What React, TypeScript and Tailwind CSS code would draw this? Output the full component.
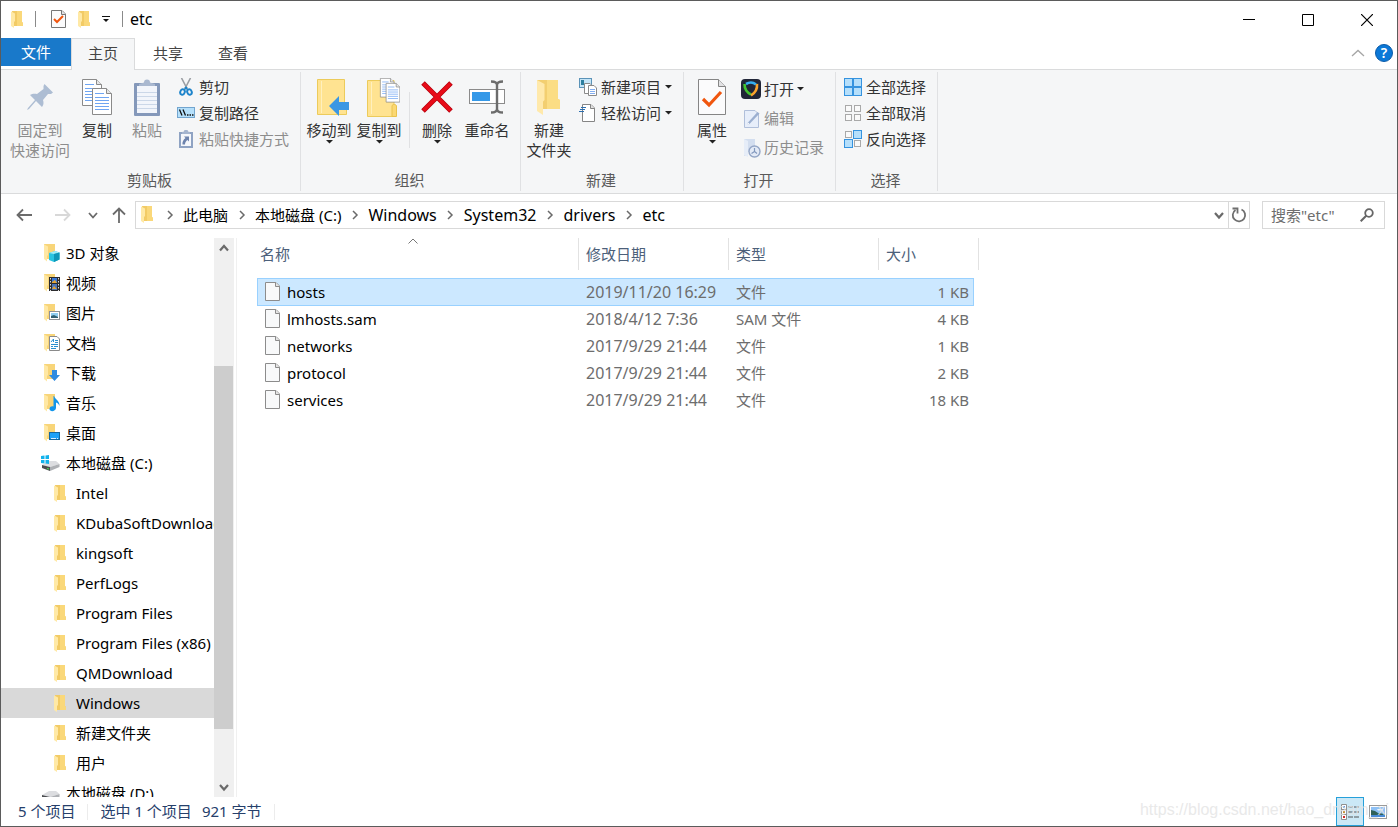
import { type ReactNode } from "react";

// ---------- Icons ----------

function FolderIcon({ className = "h-[17px] w-3" }: { className?: string }) {
  return (
    <svg viewBox="0 0 12 17" className={`shrink-0 ${className}`} aria-hidden="true">
      <path d="M1 0H11V11L12 12V15H3Z" fill="#f2cb66" />
      <path d="M6 0H11V11L12 12V15H6Z" fill="#fad87a" />
      <path d="M0 0.500L4 2.500V10L3 11V17L0 15Z" fill="#ffe9a6" />
    </svg>
  );
}

function BigFolderIcon() {
  return (
    <svg viewBox="0 0 26 36" className="h-9 w-[26px]" aria-hidden="true">
      <path d="M1 1H22V20L24 21V30H7Z" fill="#f3cf70" />
      <path d="M11 1H22V20L24 21V30H11Z" fill="#fbdd84" />
      <path d="M1 1L8.500 5V21L7 22.500V36L1 32Z" fill="#ffe9ab" />
    </svg>
  );
}

function PageIcon() {
  return (
    <svg viewBox="0 0 15 19" className="mb-0.5 h-[19px] w-[15px] shrink-0" aria-hidden="true">
      <path d="M.5.5H11L14.500 4V18.500H.5Z" fill="#f8f9fa" stroke="#8c8c8c" />
      <path d="M10.500.5V4.500H14.500" fill="#e4e4e4" stroke="#8c8c8c" />
    </svg>
  );
}

function CheckPageIcon({ className }: { className: string }) {
  return (
    <svg viewBox="0 0 28 36" className={`shrink-0 ${className}`} aria-hidden="true">
      <path d="M.5.5H20.500L27.500 7.500V35.500H.5Z" fill="#fbfbfc" stroke="#858585" />
      <path d="M20.500.5V7.500H27.500" fill="#e2e2e4" stroke="#858585" />
      <path d="M5 20L11 26L23 13" fill="none" stroke="#f0560f" strokeWidth="3.200" />
    </svg>
  );
}

function SmallCheckPageIcon() {
  return (
    <svg viewBox="0 0 15 18" className="h-[18px] w-[15px]" aria-hidden="true">
      <path d="M.5.5H11L14.500 4V17.500H.5Z" fill="#fbfbfc" stroke="#777" />
      <path d="M10.500.5V4.500H14.500" fill="#e2e2e4" stroke="#777" />
      <path d="M3 9L6 12L12 6" fill="none" stroke="#f0560f" strokeWidth="2" />
    </svg>
  );
}

function PinIcon() {
  return (
    <svg viewBox="0 0 28 28" className="h-7 w-7" aria-hidden="true">
      <path d="M18.500 1L27 9.500L25 11H22L17 17C18 20 17.500 22 16 24L10 18L3 26L1 27L2 25L9 17L4 12C6 10.500 9 10.500 11 11L17.500 6V3Z" fill="#adbdd3" />
    </svg>
  );
}

function TextPage({ x, y }: { x: number; y: number }) {
  return (
    <g transform={`translate(${x} ${y})`}>
      <path d="M.5.5H14.500L19.500 5.500V26.500H.5Z" fill="#fff" stroke="#8a8a8a" />
      <path d="M14.500.5V5.500H19.500" fill="#e6e6e6" stroke="#8a8a8a" />
      <path d="M3 5.500H12M3 9.500H17M3 12.500H17M3 15.500H17M3 18.500H17M3 21.500H17" stroke="#6fa5f2" />
    </g>
  );
}

function CopyIcon() {
  return (
    <svg viewBox="0 0 30 36" className="h-9 w-[30px]" aria-hidden="true">
      <TextPage x={0} y={0} />
      <TextPage x={10} y={9} />
    </svg>
  );
}

function PasteIcon() {
  return (
    <svg viewBox="0 0 26 37" className="h-[37px] w-[26px]" aria-hidden="true">
      <rect y="4" width="26" height="33" rx="1" fill="#8498ba" />
      <rect x="3" y="7" width="20" height="27" fill="#f2f5fb" />
      <path d="M3 13.500H23M3 17.500H23M3 21.500H23M3 25.500H23M3 29.500H23" stroke="#cbd7e8" />
      <path d="M5 7V5L10 3.500A3 3 0 0 1 16 3.500L21 5V7Z" fill="#a9b8d0" />
    </svg>
  );
}

function ScissorsIcon() {
  return (
    <svg viewBox="0 0 14 18" className="h-[18px] w-[18px]" aria-hidden="true">
      <path d="M2.500 0L8.500 11.500M11.500 0L5.500 11.500" stroke="#9a9ea3" strokeWidth="1.600" />
      <ellipse cx="3.500" cy="14" rx="2.200" ry="2.800" fill="none" stroke="#1d84cb" strokeWidth="2" transform="rotate(20 3.500 14)" />
      <ellipse cx="10.500" cy="14" rx="2.200" ry="2.800" fill="none" stroke="#1d84cb" strokeWidth="2" transform="rotate(-20 10.500 14)" />
      <circle cx="7" cy="10" r="1.500" fill="#1d84cb" />
    </svg>
  );
}

function CopyPathIcon() {
  return (
    <svg viewBox="0 0 18 12" className="h-3 w-[18px]" aria-hidden="true">
      <rect x=".5" y=".5" width="17" height="10" fill="#b5e0fb" stroke="#72a5cf" />
      <path d="M2.500 2.500L5 8.500M6 2.500L8.500 8.500" stroke="#111" strokeWidth="1.300" />
      <path d="M10 8H11.500M12.500 8H14M15 8H16.500" stroke="#111" strokeWidth="1.500" />
    </svg>
  );
}

function PasteShortcutIcon() {
  return (
    <svg viewBox="0 0 18 18" className="h-[18px] w-[18px]" aria-hidden="true">
      <rect x="2" y="2" width="14" height="16" fill="#8fa3c3" />
      <rect x="4" y="4" width="10" height="12" fill="#f5f7fb" />
      <path d="M5 4V2L7 1.500A1.500 1.500 0 0 1 11 1.500L13 2V4Z" fill="#a5b5cf" />
      <path d="M7 6.500H12V11.500L10.500 10C9 11 8 12.500 8 14.500H5.500C5 12 6.500 9.500 8.500 8Z" fill="#6d83ad" />
    </svg>
  );
}

function MoveToIcon() {
  return (
    <svg viewBox="-9 0 42 37" className="h-[37px] w-[42px]" aria-hidden="true">
      <path d="M.5 .5H27.500V23L29.500 25V35.500H.5Z" fill="#ffe391" stroke="#eccb5b" />
      <path d="M4.500 2V34" stroke="#fff0be" />
      <path d="M12 27L22 17V23H32V31H22V37Z" fill="#3b97e3" />
    </svg>
  );
}

function CopyToIcon() {
  return (
    <svg viewBox="-9 0 42 39" className="h-[39px] w-[42px]" aria-hidden="true">
      <path d="M.5 2.500H27V38.500H.5Z" fill="#ffe391" stroke="#eccb5b" />
      <path d="M4.500 4V36" stroke="#fff0be" />
      <path d="M25 38.500V28C25 26 29.500 26 29.500 28V38.500Z" fill="#fbd873" stroke="#e9c24d" />
      <g transform="translate(13 0) scale(.72)">
        <TextPage x={0} y={0} />
        <TextPage x={8} y={7} />
      </g>
    </svg>
  );
}

function DeleteIcon() {
  return (
    <svg viewBox="0 0 32 32" className="h-8 w-8" aria-hidden="true">
      <path d="M2 2L30 30M30 2L2 30" stroke="#b5000c" strokeWidth="5" />
      <path d="M2.500 2.500L29.500 29.500M29.500 2.500L2.500 29.500" stroke="#e80b18" strokeWidth="3.600" />
    </svg>
  );
}

function RenameIcon() {
  return (
    <svg viewBox="0 0 37 34" className="h-[34px] w-[37px]" aria-hidden="true">
      <rect x=".5" y="9.500" width="35" height="14" fill="#fff" stroke="#8b8b8b" />
      <rect x="3" y="12" width="18" height="9" fill="#3599e8" />
      <path d="M28 4V30M22 1.500C26 1.500 28 2.500 28 5C28 2.500 30 1.500 34 1.500M22 32.500C26 32.500 28 31.500 28 29C28 31.500 30 32.500 34 32.500" fill="none" stroke="#6c6c6c" strokeWidth="2.400" />
    </svg>
  );
}

function NewItemIcon() {
  return (
    <svg viewBox="0 0 18 18" className="h-[18px] w-[18px]" aria-hidden="true">
      <rect x=".5" y=".5" width="12" height="9" fill="#c5e5f7" stroke="#5b93b8" />
      <rect x="2" y="2" width="3" height="5" fill="#2e7f9f" />
      <path d="M5.500 5.500H11L13 7.500V15.500H5.500Z" fill="#fff" stroke="#8a8a8a" />
      <path d="M9.500 7.500H15L17.500 10V17.500H9.500Z" fill="#fff" stroke="#8a8a8a" />
      <path d="M11 11.500H16M11 13.500H16M11 15.500H16" stroke="#83aef0" />
    </svg>
  );
}

function EasyAccessIcon() {
  return (
    <svg viewBox="0 0 18 18" className="h-[18px] w-[18px]" aria-hidden="true">
      <path d="M3.500.5H12L15.500 4V17.500H3.500Z" fill="#fff" stroke="#858585" />
      <path d="M11.500.5V4.500H15.500" fill="#e1e1e1" stroke="#858585" />
      <path d="M2 3.500H7M1 5.500H6M0 7.500H5" stroke="#2c6fb0" strokeWidth="1.200" />
    </svg>
  );
}

function OpenAppIcon() {
  return (
    <svg viewBox="0 0 20 20" className="h-5 w-5" aria-hidden="true">
      <rect width="20" height="20" rx="4" fill="#212638" />
      <path d="M5 5C8.500 3 12 3 15 5.500" fill="none" stroke="#35aef0" strokeWidth="2.600" />
      <path d="M3.500 5C3.500 10 6 13.500 10 15.500" fill="none" stroke="#43c431" strokeWidth="2.600" />
      <path d="M16 5C16.500 10 14 14 10 16.500" fill="none" stroke="#fba42d" strokeWidth="2.600" />
    </svg>
  );
}

function EditIcon() {
  return (
    <svg viewBox="0 0 20 20" className="h-5 w-5" aria-hidden="true">
      <path d="M3.500 1.500H14L17.500 5V18.500H3.500Z" fill="#e7eefa" stroke="#b0bfda" />
      <path d="M6 16L7 13.500L16.500 3L18.500 4.500L8.500 15Z" fill="#9bafd0" />
      <path d="M7 13.500L8.500 15L6 16Z" fill="#fff" />
    </svg>
  );
}

function HistoryIcon() {
  return (
    <svg viewBox="0 0 20 20" className="h-5 w-5" aria-hidden="true">
      <path d="M3 1H14V14H7V17L3 18Z" fill="#d3deef" />
      <path d="M3 1L7 3V19L3 17Z" fill="#e6edf8" />
      <circle cx="13.500" cy="13.500" r="5.500" fill="#e3eaf6" stroke="#94a6c6" strokeWidth="1.400" />
      <path d="M13.500 10V13.500L16 15.500M13.500 13.500L10.500 15.500" fill="none" stroke="#8298bd" strokeWidth="1.200" />
    </svg>
  );
}

// One flag per tile: top left, top right, bottom left, bottom right
function TilesIcon({ filled }: { filled: boolean[] }) {
  return (
    <svg viewBox="0 0 18 18" className="h-[18px] w-[18px]" aria-hidden="true">
      {filled.map((on, i) => {
        const x = (i % 2) * 9;
        const y = Math.floor(i / 2) * 9;
        return on ? (
          <rect key={i} x={x + 0.5} y={y + 0.5} width="8" height="8" fill="#b5dffb" stroke="#3593df" />
        ) : (
          <rect key={i} x={x + 1.5} y={y + 1.5} width="6" height="6" fill="#fafafa" stroke="#a9a9a9" />
        );
      })}
    </svg>
  );
}

function Caret() {
  return (
    <svg viewBox="0 0 7 4" className="h-1 w-[7px] shrink-0" aria-hidden="true">
      <path d="M0 0H7L3.500 3.500Z" fill="#222" />
    </svg>
  );
}

type ChevronDir = "up" | "down" | "right";
const CHEVRON_PATHS: Record<ChevronDir, string> = {
  up: "M2 8.500L6 4L10 8.500",
  down: "M2 4L6 8.500L10 4",
  right: "M4 2L8 6L4 10",
};

function Chevron({ dir, className = "text-[#6a6a6a]", width = 1.5 }: { dir: ChevronDir; className?: string; width?: number }) {
  return (
    <svg viewBox="0 0 12 12" className={`h-3 w-3 shrink-0 ${className}`} aria-hidden="true">
      <path d={CHEVRON_PATHS[dir]} fill="none" stroke="currentColor" strokeWidth={width} />
    </svg>
  );
}

function Arrow({ d, className }: { d: string; className: string }) {
  return (
    <svg viewBox="0 0 16 16" className={`h-4 w-4 ${className}`} aria-hidden="true">
      <path d={d} fill="none" stroke="currentColor" strokeWidth="1.800" />
    </svg>
  );
}

type TreeIconName = "objects" | "video" | "pictures" | "docs" | "downloads" | "music" | "desktop" | "system" | "drive" | "folder";

function TreeIcon({ name }: { name: TreeIconName }) {
  if (name === "folder") return <FolderIcon />;
  if (name === "system" || name === "drive") {
    return (
      <svg viewBox="0 0 20 18" className="h-[18px] w-5 shrink-0" aria-hidden="true">
        <path d="M2 11L9 7H16L19.500 10L10 13Z" fill="#dcdde0" />
        <path d="M2 11L10 13V17L2 14Z" fill="#4b4d50" />
        <path d="M10 13L19.500 10V13L10 17Z" fill="#aeb0b4" />
        <path d="M7 14.500L9 15" stroke="#4be04b" strokeWidth="1.200" />
        {name === "system" && (
          <path d="M1 2L4.500 1.500V5H1ZM5.500 1.500L9 1V5H5.500ZM1 6H4.500V9.500L1 9ZM5.500 6H9V10L5.500 9.500Z" fill="#12b2ec" />
        )}
      </svg>
    );
  }
  return (
    <svg viewBox="0 0 20 18" className="h-[18px] w-5 shrink-0" aria-hidden="true">
      <path d="M4 0H15V15H7Z" fill="#f8d579" />
      <path d="M4 .5L8 2.500V11L7 12V17.500L4 15Z" fill="#ffe8a4" />
      {name === "objects" && (
        <>
          <path d="M9 9L15 7L19.500 8.500V15.500L14 18L9 16Z" fill="#29c4e0" />
          <path d="M9 9L15 7L19.500 8.500L14 10Z" fill="#a2ecf6" />
          <path d="M14 10L19.500 8.500V15.500L14 18Z" fill="#0e97b8" />
        </>
      )}
      {name === "video" && (
        <>
          <rect x="9" y="3" width="11" height="14" fill="#2b2b2d" />
          <rect x="12" y="4" width="5" height="5" fill="#3a78d6" />
          <rect x="12" y="10" width="5" height="6" fill="#4a74b8" />
          <path d="M12 8L15 6L17 9H12ZM12 15L14 12L17 15Z" fill="#e4a437" />
          <path d="M10.500 4V17M18.500 4V17" stroke="#ddd" strokeDasharray="1.500 1.500" />
        </>
      )}
      {name === "pictures" && (
        <>
          <rect x="9.500" y="7.500" width="10" height="8" fill="#fff" stroke="#8f9296" />
          <rect x="11" y="9" width="7" height="5" fill="#8fcdf0" />
          <path d="M11 14V12L14 11L18 13V14Z" fill="#315f71" />
        </>
      )}
      {name === "docs" && (
        <>
          <path d="M9.500 2.500H17L19.500 5V16.500H9.500Z" fill="#fff" stroke="#8a8a8a" />
          <path d="M11 8L13.500 5V8M11 10.500H18M15 6.500H18M15 8.500H18M11 12.500H13M14 12.500H18M11 14.500H16" fill="none" stroke="#2c90d0" />
        </>
      )}
      {name === "downloads" && <path d="M12 6H17V11H20L14.500 17L9 11H12Z" fill="#2f8be0" />}
      {name === "music" && (
        <path d="M14 2C15 5 20 7 19.500 12C18.500 9.500 17.500 9 16 8.500V14C15.500 18 9.500 18 9.500 15C9.500 12.500 12 12 13.500 12.500V2Z" fill="#1295ea" />
      )}
      {name === "desktop" && (
        <>
          <rect x="9.500" y="8.500" width="10" height="7" fill="#1da1f7" stroke="#17689f" />
          <path d="M11 14.500H16M17 14.500H18" stroke="#d9f0ff" />
        </>
      )}
    </svg>
  );
}

// ---------- Ribbon ----------

interface RibbonGroupProps {
  title: string;
  className: string;
  children: ReactNode;
}

function RibbonGroup({ title, className, children }: RibbonGroupProps) {
  return (
    <section aria-label={title} className={`flex shrink-0 flex-col border-r border-[#e0e1e3] ${className}`}>
      <div className="flex min-h-[99px] items-start">{children}</div>
      <div className="h-5 pr-0.5 text-center leading-[18px] text-[#5a5a5a]">{title}</div>
    </section>
  );
}

interface BigButtonProps {
  icon: ReactNode;
  lines: string[];
  className: string;
  caret?: boolean;
  disabled?: boolean;
}

function BigButton({ icon, lines, className, caret, disabled }: BigButtonProps) {
  return (
    <button
      type="button"
      disabled={disabled}
      className={`flex shrink-0 flex-col items-center pt-1.5 leading-5 whitespace-nowrap ${disabled ? "text-[#8d8d8d]" : "text-[#333]"} ${className}`}
    >
      <span className="flex h-[42px] items-start justify-center">
        <span className="flex h-[38px] items-center">{icon}</span>
      </span>
      {lines.map((line) => (
        <span key={line}>{line}</span>
      ))}
      {caret && <Caret />}
    </button>
  );
}

interface SmallButtonProps {
  icon: ReactNode;
  label: string;
  className?: string;
  caret?: boolean;
  disabled?: boolean;
}

function SmallButton({ icon, label, className = "h-[26px] gap-1", caret, disabled }: SmallButtonProps) {
  return (
    <button
      type="button"
      disabled={disabled}
      className={`flex items-center whitespace-nowrap ${disabled ? "text-[#8d8d8d]" : "text-[#333]"} ${className}`}
    >
      {icon}
      <span>{label}</span>
      {caret && <Caret />}
    </button>
  );
}

function Ribbon() {
  return (
    <div className="flex overflow-hidden border-y border-[#dadbdc] bg-[#f5f6f7] py-0.5">
      <RibbonGroup title="剪贴板" className="w-[300px]">
        <BigButton className="ml-2 w-[62px]" icon={<PinIcon />} lines={["固定到", "快速访问"]} disabled />
        <BigButton className="w-[52px]" icon={<CopyIcon />} lines={["复制"]} />
        <BigButton className="w-12" icon={<PasteIcon />} lines={["粘贴"]} disabled />
        <div className="ml-1.5 flex flex-col pt-0.5">
          <SmallButton icon={<ScissorsIcon />} label="剪切" />
          <SmallButton icon={<CopyPathIcon />} label="复制路径" />
          <SmallButton icon={<PasteShortcutIcon />} label="粘贴快捷方式" disabled />
        </div>
      </RibbonGroup>

      <RibbonGroup title="组织" className="w-[220px]">
        <BigButton className="ml-[3px] w-[50px]" icon={<MoveToIcon />} lines={["移动到"]} caret />
        <BigButton className="w-[50px]" icon={<CopyToIcon />} lines={["复制到"]} caret />
        <div className="mr-[3px] ml-[5px] mt-5 h-14 w-px bg-[#e0e1e3]" />
        <BigButton className="w-12" icon={<DeleteIcon />} lines={["删除"]} caret />
        <BigButton className="w-[52px]" icon={<RenameIcon />} lines={["重命名"]} />
      </RibbonGroup>

      <RibbonGroup title="新建" className="w-[163px]">
        <BigButton className="mr-[5px] ml-[3px] w-[50px]" icon={<BigFolderIcon />} lines={["新建", "文件夹"]} />
        <div className="flex flex-col pt-0.5">
          <SmallButton icon={<NewItemIcon />} label="新建项目" caret />
          <SmallButton icon={<EasyAccessIcon />} label="轻松访问" caret />
        </div>
      </RibbonGroup>

      <RibbonGroup title="打开" className="w-[152px]">
        <BigButton className="mr-[5px] ml-1 w-12" icon={<CheckPageIcon className="h-9 w-7" />} lines={["属性"]} caret />
        <div className="flex flex-col pt-0.5">
          <SmallButton className="h-[30px] gap-[3px]" icon={<OpenAppIcon />} label="打开" caret />
          <SmallButton className="h-[29px] gap-[3px]" icon={<EditIcon />} label="编辑" disabled />
          <SmallButton className="h-[29px] gap-[3px]" icon={<HistoryIcon />} label="历史记录" disabled />
        </div>
      </RibbonGroup>

      <RibbonGroup title="选择" className="w-[102px]">
        <div className="ml-2 flex flex-col pt-0.5">
          <SmallButton icon={<TilesIcon filled={[true, true, true, true]} />} label="全部选择" />
          <SmallButton icon={<TilesIcon filled={[false, false, false, false]} />} label="全部取消" />
          <SmallButton icon={<TilesIcon filled={[false, true, true, false]} />} label="反向选择" />
        </div>
      </RibbonGroup>
    </div>
  );
}

// ---------- Window chrome ----------

function TitleBar() {
  return (
    <header className="flex h-[37px] shrink-0 items-center">
      <div className="flex items-center pb-px pl-2.5">
        <FolderIcon />
        <span className="mr-[15px] ml-3 h-4 w-px bg-[#8a8a8a]" />
        <button type="button" aria-label="属性">
          <SmallCheckPageIcon />
        </button>
        <button type="button" aria-label="新建文件夹" className="ml-3">
          <FolderIcon />
        </button>
        <button type="button" aria-label="自定义快速访问工具栏" className="mx-3">
          <svg viewBox="0 0 8 6" className="h-1.5 w-2" aria-hidden="true">
            <path d="M0 .5H8" stroke="#111" />
            <path d="M1 3H7L4 6Z" fill="#111" />
          </svg>
        </button>
        <span className="mr-[7px] h-4 w-px bg-[#8a8a8a]" />
        <h1 className="text-base">etc</h1>
      </div>
      <div className="ml-auto flex h-full pr-px">
        <button type="button" aria-label="最小化" className="flex w-[59px] items-center justify-center">
          <svg viewBox="0 0 12 12" className="h-3 w-3"><path d="M0 5.500H12" stroke="#000" /></svg>
        </button>
        <button type="button" aria-label="最大化" className="flex w-[59px] items-center justify-center">
          <svg viewBox="0 0 12 12" className="h-3 w-3"><path d="M.5.5H11.500V11.500H.5Z" fill="none" stroke="#000" /></svg>
        </button>
        <button type="button" aria-label="关闭" className="flex w-[59px] items-center justify-center">
          <svg viewBox="0 0 12 12" className="h-3 w-3"><path d="M0 0L12 12M12 0L0 12" stroke="#000" strokeWidth="1.200" /></svg>
        </button>
      </div>
    </header>
  );
}

function TabBar() {
  return (
    <nav className="flex h-[31px] shrink-0 items-start text-[#444]">
      <button type="button" className="h-7 w-[70px] bg-[#1979ca] text-white">文件</button>
      {/* covers the ribbon's top border */}
      <button type="button" className="relative z-10 h-8 w-16 border border-b-0 border-[#dadbdc] bg-[#f5f6f7] pb-0.5">主页</button>
      <button type="button" className="h-[30px] w-[66px]">共享</button>
      <button type="button" className="h-[30px] w-16">查看</button>
      <div className="ml-auto flex h-[30px] items-center gap-2.5 pr-1">
        <button type="button" aria-label="最小化功能区">
          <svg viewBox="0 0 14 8" className="h-2 w-3.5"><path d="M1 7L7 1.500L13 7" fill="none" stroke="#a6a6a6" strokeWidth="1.300" /></svg>
        </button>
        <button type="button" aria-label="帮助" className="flex h-[18px] w-[18px] items-center justify-center rounded-full border border-[#0b5ba8] bg-[#0b78d7] text-sm font-semibold text-white">
          ?
        </button>
      </div>
    </nav>
  );
}

const CRUMBS = ["此电脑", "本地磁盘 (C:)", "Windows", "System32", "drivers", "etc"];

// Latin-only crumbs are set one size up from Chinese ones
function crumbSize(text: string): string {
  return /^[\x20-\x7e]+$/.test(text) ? "text-base" : "text-[15px]";
}

function AddressRow() {
  return (
    <div className="flex shrink-0 items-center pt-[7px] pr-3 pb-2">
      <div className="flex w-[134px] shrink-0 items-center pl-[15px]">
        <button type="button" aria-label="后退"><Arrow d="M16 8H1M7 2.500L1.500 8L7 13.500" className="text-[#6b6b6b]" /></button>
        <button type="button" aria-label="前进" className="ml-[23px]" disabled><Arrow d="M0 8H15M9 2.500L14.500 8L9 13.500" className="text-[#d8d8d8]" /></button>
        <button type="button" aria-label="最近浏览的位置" className="ml-4"><Chevron dir="down" width={1.8} /></button>
        <button type="button" aria-label="上移" className="ml-3"><Arrow d="M8 16V1M2 7.500L8 1.500L14 7.500" className="text-[#6b6b6b]" /></button>
      </div>
      <div className="flex h-7 min-w-0 flex-1 items-center border border-[#d9d9d9]">
        <div className="flex min-w-0 flex-1 items-center overflow-hidden pb-px pl-[5px] whitespace-nowrap">
          <span className="mr-[3px] flex"><FolderIcon /></span>
          {CRUMBS.map((crumb) => (
            <span key={crumb} className="flex items-center">
              <span className="flex w-[27px] justify-center"><Chevron dir="right" /></span>
              <button type="button" className={`leading-6 ${crumbSize(crumb)}`}>{crumb}</button>
            </span>
          ))}
        </div>
        <button type="button" aria-label="以前的位置" className="mr-[3px]"><Chevron dir="down" width={2.2} /></button>
        <button type="button" aria-label="刷新" className="flex h-full w-[21px] items-center justify-center border-l border-[#d9d9d9]">
          <svg viewBox="0 0 16 16" className="h-4 w-4" aria-hidden="true">
            <path d="M10.500 2.500A6.200 6.200 0 1 1 4.500 3" fill="none" stroke="#6f6f6f" strokeWidth="1.800" />
            <path d="M1.500 1.500H6.500V6.500" fill="none" stroke="#6f6f6f" strokeWidth="1.800" />
          </svg>
        </button>
      </div>
      <form className="ml-3 flex h-7 w-[123px] shrink-0 items-center border border-[#d9d9d9]" onSubmit={(e) => e.preventDefault()}>
        <input
          type="text"
          aria-label="搜索"
          placeholder={'搜索"etc"'}
          className="min-w-0 flex-1 pl-2 outline-none placeholder:text-[#6d6d6d]"
        />
        <button type="submit" aria-label="搜索" className="mr-2.5">
          <svg viewBox="0 0 14 14" className="h-3.5 w-3.5" aria-hidden="true">
            <circle cx="9" cy="5" r="3.800" fill="none" stroke="#666" strokeWidth="1.800" />
            <path d="M6.500 7.500L.7 13.300" stroke="#666" strokeWidth="2" />
          </svg>
        </button>
      </form>
    </div>
  );
}

// ---------- Navigation tree ----------

interface TreeNode {
  name: string;
  icon: TreeIconName;
  selected?: boolean;
}

const TREE: TreeNode[] = [
  { name: "3D 对象", icon: "objects" },
  { name: "视频", icon: "video" },
  { name: "图片", icon: "pictures" },
  { name: "文档", icon: "docs" },
  { name: "下载", icon: "downloads" },
  { name: "音乐", icon: "music" },
  { name: "桌面", icon: "desktop" },
  { name: "本地磁盘 (C:)", icon: "system" },
  { name: "Intel", icon: "folder" },
  { name: "KDubaSoftDownloads", icon: "folder" },
  { name: "kingsoft", icon: "folder" },
  { name: "PerfLogs", icon: "folder" },
  { name: "Program Files", icon: "folder" },
  { name: "Program Files (x86)", icon: "folder" },
  { name: "QMDownload", icon: "folder" },
  { name: "Windows", icon: "folder", selected: true },
  { name: "新建文件夹", icon: "folder" },
  { name: "用户", icon: "folder" },
  { name: "本地磁盘 (D:)", icon: "drive" },
];

function Sidebar() {
  return (
    <aside className="flex w-[236px] shrink-0 border-r border-[#f0f0f0]">
      <ul className="w-[213px] overflow-hidden">
        {TREE.map((node) => (
          <li key={node.name}>
            <button
              type="button"
              className={`flex h-[30px] w-full items-center whitespace-nowrap ${
                node.icon === "folder" ? "gap-2.5 pl-[53px]" : "gap-1.5 pl-[39px]"
              } ${node.selected ? "bg-[#d9d9d9]" : ""}`}
            >
              <TreeIcon name={node.icon} />
              <span>{node.name}</span>
            </button>
          </li>
        ))}
      </ul>
      <div className="flex w-5 flex-col bg-[#f0f0f0]">
        <button type="button" aria-label="向上滚动" className="flex h-5 items-center justify-center"><Chevron dir="up" width={2.2} /></button>
        <div className="flex-[108]" />
        <div className="mr-px flex-[363] bg-[#cdcdcd]" />
        <div className="flex-[48]" />
        <button type="button" aria-label="向下滚动" className="flex h-5 items-center justify-center"><Chevron dir="down" width={2.2} /></button>
      </div>
    </aside>
  );
}

// ---------- File list ----------

interface FileRow {
  name: string;
  modified: string;
  type: string;
  size: string;
  selected?: boolean;
}

const FILES: FileRow[] = [
  { name: "hosts", modified: "2019/11/20 16:29", type: "文件", size: "1 KB", selected: true },
  { name: "lmhosts.sam", modified: "2018/4/12 7:36", type: "SAM 文件", size: "4 KB" },
  { name: "networks", modified: "2017/9/29 21:44", type: "文件", size: "1 KB" },
  { name: "protocol", modified: "2017/9/29 21:44", type: "文件", size: "2 KB" },
  { name: "services", modified: "2017/9/29 21:44", type: "文件", size: "18 KB" },
];

const COLUMNS = ["名称", "修改日期", "类型", "大小"];

function FileTable() {
  return (
    <table className="w-[722px] table-fixed border-separate border-spacing-0 text-left">
      <colgroup>
        <col />
        <col className="w-[150px]" />
        <col className="w-[150px]" />
        <col className="w-[95px]" />
        <col className="w-[5px]" />
      </colgroup>
      <thead>
        <tr>
          {COLUMNS.map((label, i) => (
            <th key={label} scope="col" className="h-10 p-0 align-top font-normal text-[#4c607a]">
              <button
                type="button"
                className={`relative flex h-8 w-full items-center border-[#e2e2e2] ${i === 0 ? "pl-[3px]" : "pl-[7px]"} ${i < 3 ? "border-r" : ""}`}
              >
                {label}
                {i === 0 && (
                  <svg viewBox="0 0 10 6" className="absolute top-0 right-1/2 h-1.5 w-2.5" aria-hidden="true">
                    <path d="M.5 5.500L5 1L9.500 5.500" fill="none" stroke="#777" />
                  </svg>
                )}
              </button>
            </th>
          ))}
          <td className="p-0 align-top"><div className="h-8 border-r border-[#e2e2e2]" /></td>
        </tr>
      </thead>
      <tbody>
        {FILES.map((file) => {
          const cell = file.selected ? "h-7 border-y border-[#99d1ff] bg-[#cce8ff]" : "h-[27px] pb-px";
          return (
            <tr key={file.name} className="text-[#6d6d6d]">
              <td className={`pt-0 pr-0 leading-5 text-black ${cell} ${file.selected ? "border-l pl-[7px]" : "pl-2"}`}>
                <div className="flex items-center gap-[7px]">
                  <PageIcon />
                  {file.name}
                </div>
              </td>
              <td className={`pt-0 pr-0 pl-[7px] text-base leading-5 ${cell}`}>{file.modified}</td>
              <td className={`pt-0 pr-0 pl-[7px] leading-5 ${cell}`}>{file.type}</td>
              <td className={`pt-0 pl-0 text-right leading-5 ${cell} ${file.selected ? "border-r pr-1" : "pr-[5px]"}`}>{file.size}</td>
            </tr>
          );
        })}
      </tbody>
    </table>
  );
}

function StatusBar() {
  return (
    <footer className="relative flex h-[29px] shrink-0 items-center text-[#26406b]">
      <span className="pl-[17px]">5 个项目</span>
      <span className="mx-3 h-4 w-px bg-[#ececec]" />
      <span>选中 1 个项目</span>
      <span className="ml-2.5">921 字节</span>
      <span className="ml-3 h-4 w-px bg-[#ececec]" />
      <div className="ml-auto flex h-full items-center pr-2.5">
        <button type="button" aria-label="详细信息" className="flex h-full w-7 items-center justify-center border border-[#26a0da] bg-[#cbe8f6]">
          <svg viewBox="0 0 18 16" className="h-4 w-[18px]" aria-hidden="true">
            <path d="M.5.5H5.500V15.500H.5ZM.5 5.500H5.500M.5 10.500H5.500" fill="#fff" stroke="#8f8f8f" />
            <path d="M7 3H12M13 3H18M7 8H12M13 8H18M7 13H12M13 13H18" stroke="#555" />
            <path d="M2 3H4" stroke="#3b8ee0" strokeWidth="2" />
            <path d="M2 8H4" stroke="#c48c2c" strokeWidth="2" />
            <path d="M2 13H4" stroke="#d02b2b" strokeWidth="2" />
          </svg>
        </button>
        <button type="button" aria-label="大缩略图" className="ml-[5px]">
          <svg viewBox="0 0 18 14" className="h-3.5 w-[18px]" aria-hidden="true">
            <rect x=".5" y=".5" width="17" height="13" fill="#fff" stroke="#9b9b9b" />
            <rect x="2" y="2" width="14" height="10" fill="#8fc1f5" />
            <path d="M2 5L6 6L9 8L16 9V10H2Z" fill="#2f6158" />
            <path d="M2 10H16V12H2Z" fill="#4a8bd8" />
            <path d="M8 4H14V5.500H9Z" fill="#e8f4ff" />
          </svg>
        </button>
      </div>
      <span className="pointer-events-none absolute right-2 bottom-1 font-['Liberation_Sans',sans-serif] text-base leading-6 text-[#e3e3e3]/80">
        https://blog.csdn.net/hao_dream_xi
      </span>
    </footer>
  );
}

export default function App() {
  return (
    <div className="flex h-screen flex-col overflow-hidden border border-[#5b5b5b] bg-white font-['Noto_Sans','Noto_Sans_CJK_SC',sans-serif] text-[15px] text-black">
      <TitleBar />
      <TabBar />
      <Ribbon />
      <AddressRow />
      <div className="flex min-h-0 flex-1 pt-px">
        <Sidebar />
        <main className="min-w-0 flex-1 overflow-hidden pl-5">
          <FileTable />
        </main>
      </div>
      <StatusBar />
    </div>
  );
}
